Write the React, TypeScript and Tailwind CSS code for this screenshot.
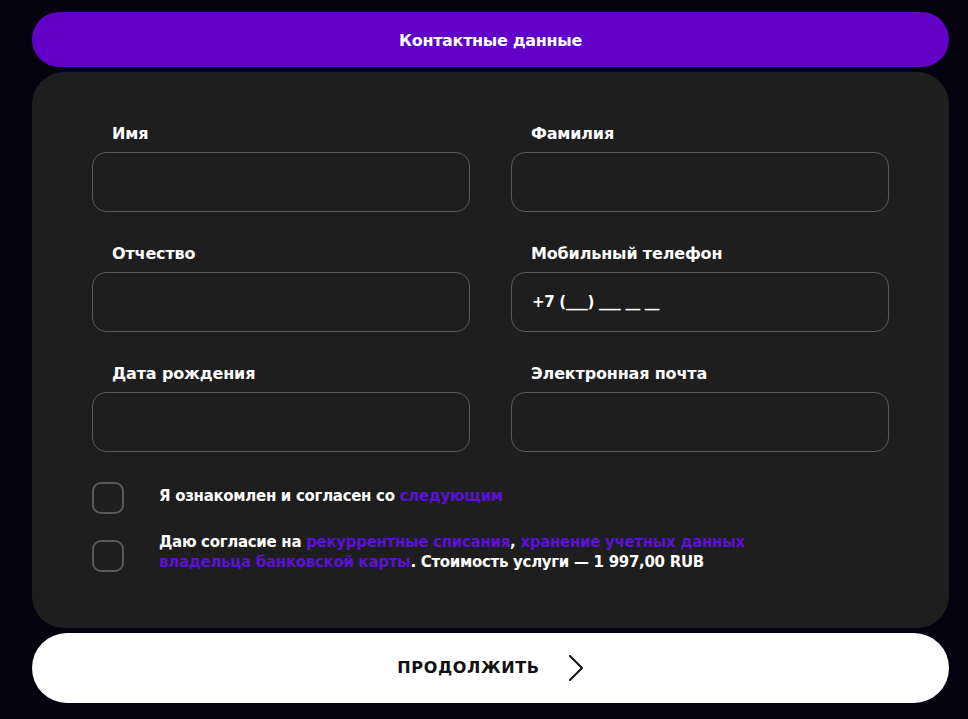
const fields = [
  { label: 'Имя', value: '' },
  { label: 'Фамилия', value: '' },
  { label: 'Отчество', value: '' },
  { label: 'Мобильный телефон', value: '+7 (___) ___ __ __' },
  { label: 'Дата рождения', value: '' },
  { label: 'Электронная почта', value: '' },
]

function Field({ label, value }: { label: string; value: string }) {
  return (
    <div className="flex flex-col">
      <label className="pl-5 text-[16px] leading-5 font-semibold text-white mb-[8px] tracking-[-0.01em]">{label}</label>
      <div className="h-[60px] rounded-[14px] border border-[#5a5a5a] flex items-center px-5 text-white text-[15px] font-semibold tracking-[-0.02em]">
        {value}
      </div>
    </div>
  )
}

export default function App() {
  return (
    <div
      className="min-h-screen bg-[#05020f] pl-8 pr-[19px] pt-3 pb-4"
      style={{ fontFamily: '"DejaVu Sans", Inter, sans-serif' }}
    >
      <div className="h-[55px] rounded-full bg-[#6200c7] flex items-center justify-center pt-[2px]">
        <span className="text-white font-bold text-[16px] tracking-[-0.02em]">Контактные данные</span>
      </div>

      <div className="mt-[5px] rounded-[32px] bg-[#1e1e1e] px-[60px] pt-[52px] pb-[49px]">
        <div className="grid grid-cols-2 gap-x-[41px] gap-y-[32px]">
          {fields.map((f) => (
            <Field key={f.label} label={f.label} value={f.value} />
          ))}
        </div>

        {/* checkboxes */}
        <div className="mt-[30px] flex flex-col gap-[18px]">
          <div className="flex items-center gap-[35px]">
            <div className="w-8 h-8 rounded-[9px] border-2 border-[#5a5a5a] shrink-0" />
            <p className="text-white text-[15px] font-semibold tracking-[-0.02em] mb-[4px]">
              Я ознакомлен и согласен со <span className="text-[#5a12d4]">следующим</span>
            </p>
          </div>
          <div className="flex items-center gap-[35px]">
            <div className="w-8 h-8 rounded-[9px] border-2 border-[#5a5a5a] shrink-0" />
            <p className="text-white text-[15px] leading-[20px] font-semibold tracking-[-0.02em] max-w-[600px] mb-[7px]">
              Даю согласие на <span className="text-[#5a12d4]">рекуррентные списания</span>,{' '}
              <span className="text-[#5a12d4]">хранение учетных данных владельца банковской карты</span>. Стоимость
              услуги — 1 997,00 RUB
            </p>
          </div>
        </div>
      </div>

      <button className="mt-[5px] w-full h-[70px] rounded-full bg-white flex items-center justify-center gap-[28px]">
        <span className="text-[#111] text-[16px] font-semibold tracking-[0.04em]">ПРОДОЛЖИТЬ</span>
        <svg width="16" height="26" viewBox="0 0 16 26" fill="none" stroke="#111" strokeWidth="2" strokeLinecap="round" strokeLinejoin="round">
          <polyline points="2,1 14,13 2,25" />
        </svg>
      </button>
    </div>
  )
}
